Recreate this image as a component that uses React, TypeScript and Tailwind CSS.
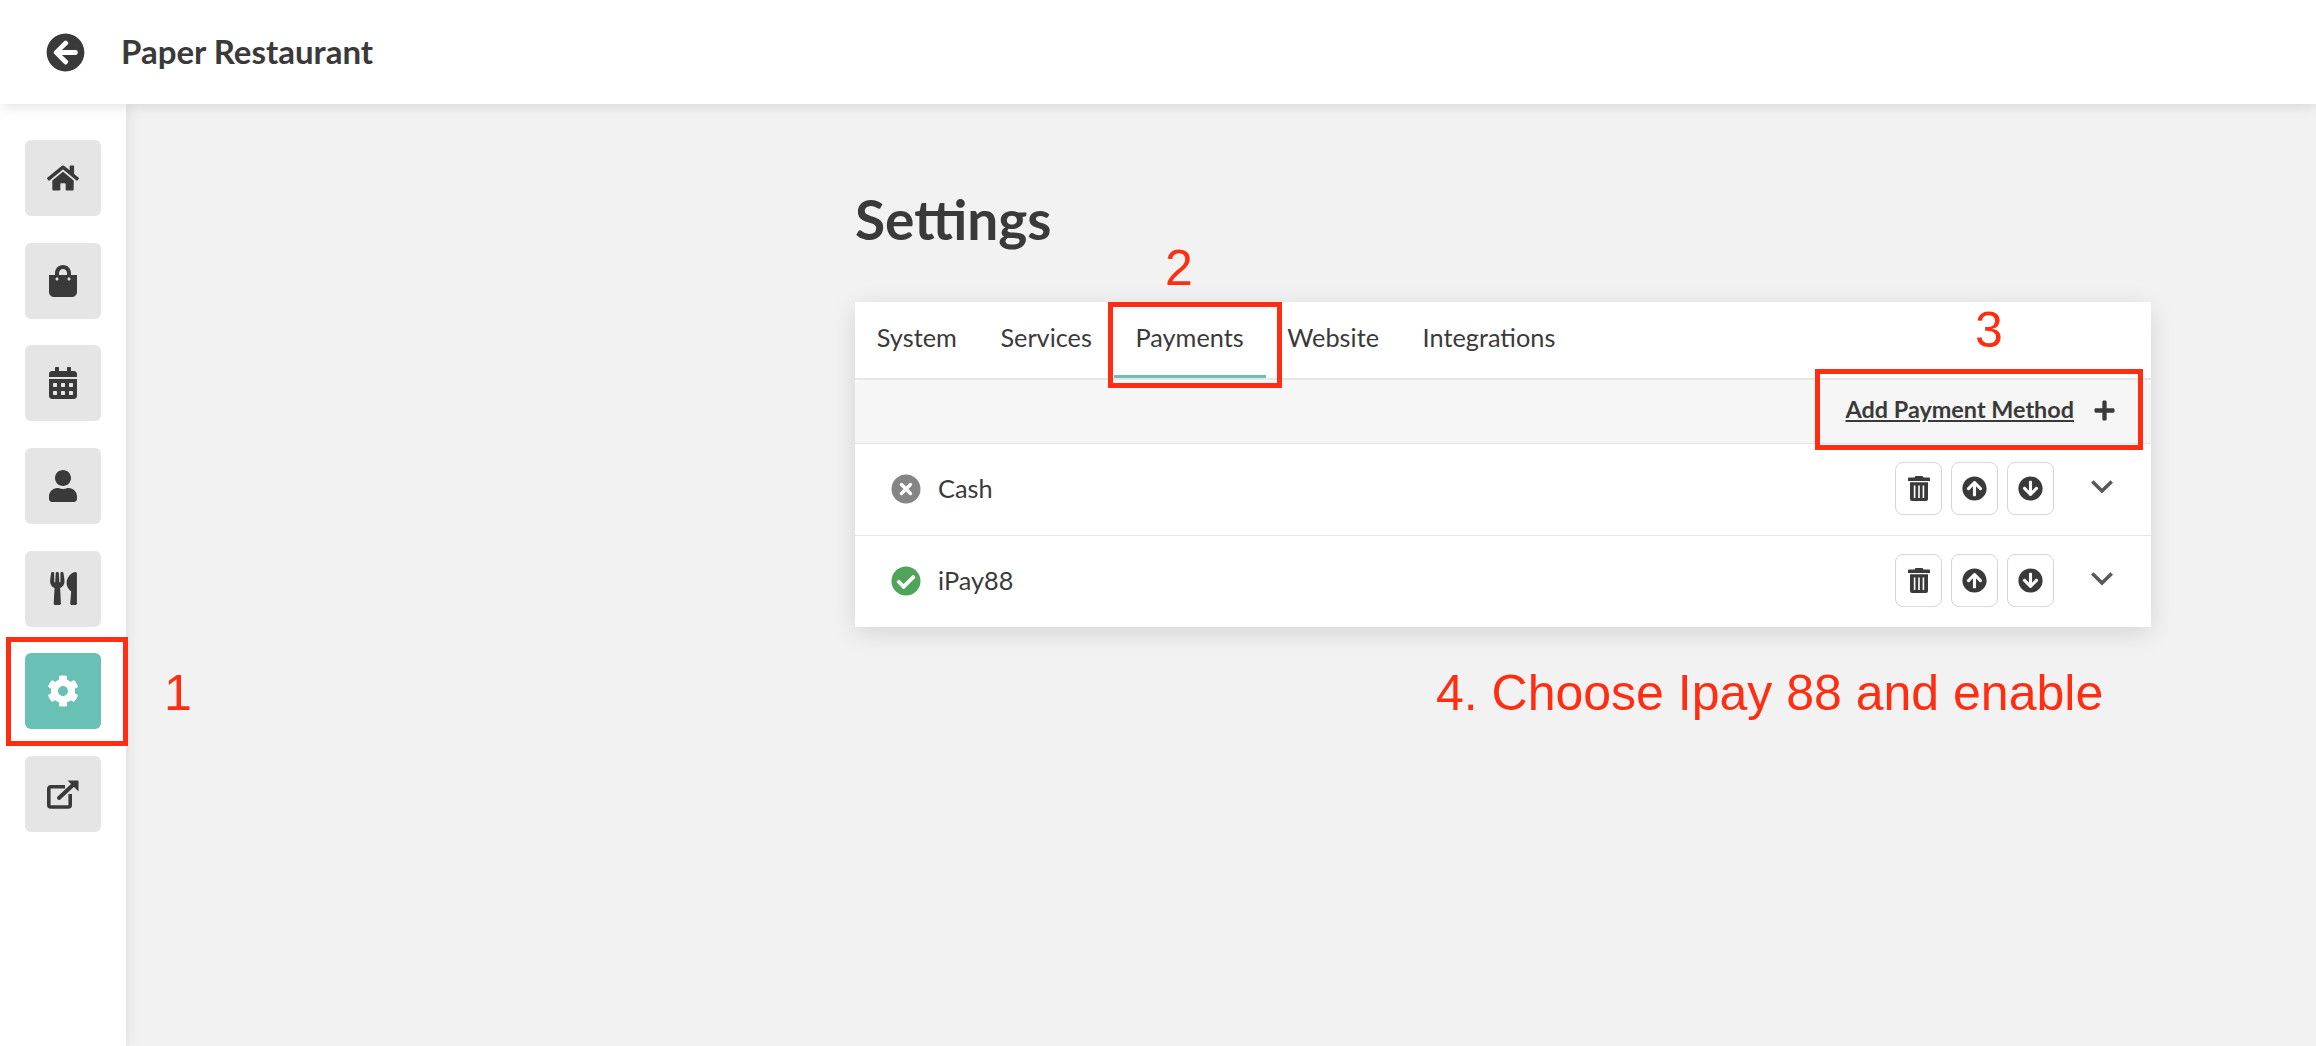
import { FaArrowCircleLeft, FaArrowCircleDown, FaArrowCircleUp, FaCalendarAlt, FaCheckCircle, FaCog, FaHome, FaPlus, FaShoppingBag, FaUser, FaUtensils } from 'react-icons/fa';
import type { ReactNode } from 'react';

const ExternalIcon = () => (
  <svg viewBox="0 0 32 29" className="w-[32px] h-[29px]" fill="none" stroke="#3a3a3a">
    <path d="M23.2 14v11a2 2 0 0 1-2 2H3.8a2 2 0 0 1-2-2V8.800a2 2 0 0 1 2-2H18" strokeWidth="3.6" />
    <path d="M12 18 27 4" strokeWidth="4" strokeLinecap="round" />
    <path d="M20.500 0.500H31a0.500 0.500 0 0 1 0.500 0.500V11.500z" fill="#3a3a3a" stroke="none" />
  </svg>
);

const TrashIcon = () => (
  <svg viewBox="0 0 22 25" className="w-[22px] h-[25px]" fill="#3a3a3a">
    <path d="M7.500 0h7l1 1.500H21a1 1 0 0 1 1 1V5H0V2.500a1 1 0 0 1 1-1h5.500z" />
    <path d="M2 6.300h18V23a2 2 0 0 1-2 2H4a2 2 0 0 1-2-2z" />
    <rect x="5.800" y="9.500" width="1.600" height="12.500" fill="#fff" />
    <rect x="10.200" y="9.500" width="1.600" height="12.500" fill="#fff" />
    <rect x="14.600" y="9.500" width="1.600" height="12.500" fill="#fff" />
  </svg>
);

const ChevronIcon = () => (
  <svg viewBox="0 0 22 14" className="w-[22px] h-[14px]" fill="none" stroke="#595959" strokeWidth="3.6">
    <path d="M1.300 1.500 11 11l9.700-9.500" />
  </svg>
);

const DisabledIcon = () => (
  <svg viewBox="0 0 30 30" className="w-[30px] h-[30px]">
    <circle cx="15" cy="15" r="14.500" fill="#858585" />
    <path d="M10.500 10.500 19.500 19.500M19.500 10.500 10.500 19.500" stroke="#fff" strokeWidth="3.4" strokeLinecap="round" />
  </svg>
);

const navItems = [
  { icon: <FaHome size={32} /> },
  { icon: <FaShoppingBag size={32} /> },
  { icon: <FaCalendarAlt size={32} /> },
  { icon: <FaUser size={32} /> },
  { icon: <FaUtensils size={33} /> },
  { icon: <FaCog size={32} />, active: true },
  { icon: <ExternalIcon /> },
];

const tabs = ['System', 'Services', 'Payments', 'Website', 'Integrations'];

const IconButton = ({ children }: { children: ReactNode }) => (
  <button className="w-[47px] h-[53px] flex items-center justify-center rounded-[8px] border border-[#d6d6d6] bg-white">
    {children}
  </button>
);

const PaymentRow = ({ name, enabled, last }: { name: string; enabled: boolean; last?: boolean }) => (
  <div className={`flex items-center pl-[36px] pr-[38px] pb-[2px] ${last ? 'h-[91px]' : 'h-[92px] border-b border-[#e6e6e6]'}`}>
    {enabled ? <FaCheckCircle size={30} color="#50a45a" /> : <DisabledIcon />}
    <span className="ml-[17px] text-[25.3px] text-[#3a3a3a]">{name}</span>
    <div className="ml-auto flex items-center gap-[9px]">
      <IconButton>
        <TrashIcon />
      </IconButton>
      <IconButton>
        <FaArrowCircleUp size={25} />
      </IconButton>
      <IconButton>
        <FaArrowCircleDown size={25} />
      </IconButton>
    </div>
    <div className="ml-[37px] -mt-[3px]">
      <ChevronIcon />
    </div>
  </div>
);

export default function App() {
  return (
    <div className="relative h-screen w-full flex flex-col overflow-hidden bg-[#f2f2f2] text-[#3a3a3a] font-['Lato','Open_Sans',sans-serif]">
      <header className="relative z-20 h-[104px] shrink-0 bg-white flex items-center pl-[46px] shadow-[0_2px_14px_rgba(0,0,0,0.12)]">
        <FaArrowCircleLeft size={39} />
        <h1 className="ml-[36px] text-[33px] font-bold">Paper Restaurant</h1>
      </header>
      <div className="flex flex-1 min-h-0">
        <aside className="relative z-10 w-[126px] shrink-0 bg-white pl-[25px] pt-[36px] flex flex-col gap-[26.7px] shadow-[0_0_14px_rgba(0,0,0,0.1)]">
          {navItems.map((item, i) => (
            <div
              key={i}
              className={`w-[76px] h-[76px] rounded-[6px] flex items-center justify-center ${item.active ? 'bg-[#69c1b6] text-white' : 'bg-[#e5e5e5] text-[#3a3a3a]'}`}
            >
              {item.icon}
            </div>
          ))}
        </aside>
        <main className="flex-1 pl-[729px]">
          <h2 className="mt-[83px] h-[64px] text-[55px] leading-[64px] font-bold">Settings</h2>
          <div className="mt-[51px] w-[1296px] bg-white shadow-[0_6px_24px_rgba(0,0,0,0.12)]">
            <nav className="h-[78px] flex items-stretch border-b-2 border-[#e6e6e6] text-[25.3px]">
              {tabs.map((tab) => (
                <div key={tab} className={`flex items-center px-[21.8px] pb-[2px] border-b-[3px] ${tab === 'Payments' ? 'border-[#69c1b6]' : 'border-transparent'}`}>
                  {tab}
                </div>
              ))}
            </nav>
            <div className="h-[64px] flex items-center justify-end rounded-t-[6px] bg-[#f6f6f6] border-b border-[#e6e6e6] pr-[35.5px] pb-[3px]">
              <span className="text-[23.4px] font-bold underline">Add Payment Method</span>
              <FaPlus size={23} className="ml-[18.5px]" />
            </div>
            <PaymentRow name="Cash" enabled={false} />
            <PaymentRow name="iPay88" enabled last />
          </div>
        </main>
      </div>

      <div className="absolute z-30 left-[6px] top-[637px] w-[122px] h-[109px] border-[5px] border-[#ff2d12]" />
      <div className="absolute z-30 left-[1108px] top-[302px] w-[174px] h-[86px] border-[5px] border-[#ff2d12]" />
      <div className="absolute z-30 left-[1815px] top-[369px] w-[328px] h-[81px] border-[5px] border-[#ff2d12]" />

      <span className="absolute z-30 left-[164px] top-[664px] text-[50px] leading-[58px] text-[#ff2d12] font-['Liberation_Sans',sans-serif]">1</span>
      <span className="absolute z-30 left-[1165px] top-[239px] text-[50px] leading-[58px] text-[#ff2d12] font-['Liberation_Sans',sans-serif]">2</span>
      <span className="absolute z-30 left-[1975px] top-[301px] text-[50px] leading-[58px] text-[#ff2d12] font-['Liberation_Sans',sans-serif]">3</span>
      <span className="absolute z-30 left-[1436px] top-[664px] text-[50px] leading-[58px] text-[#ff2d12] font-['Liberation_Sans',sans-serif]">4. Choose Ipay 88 and enable</span>
    </div>
  );
}
